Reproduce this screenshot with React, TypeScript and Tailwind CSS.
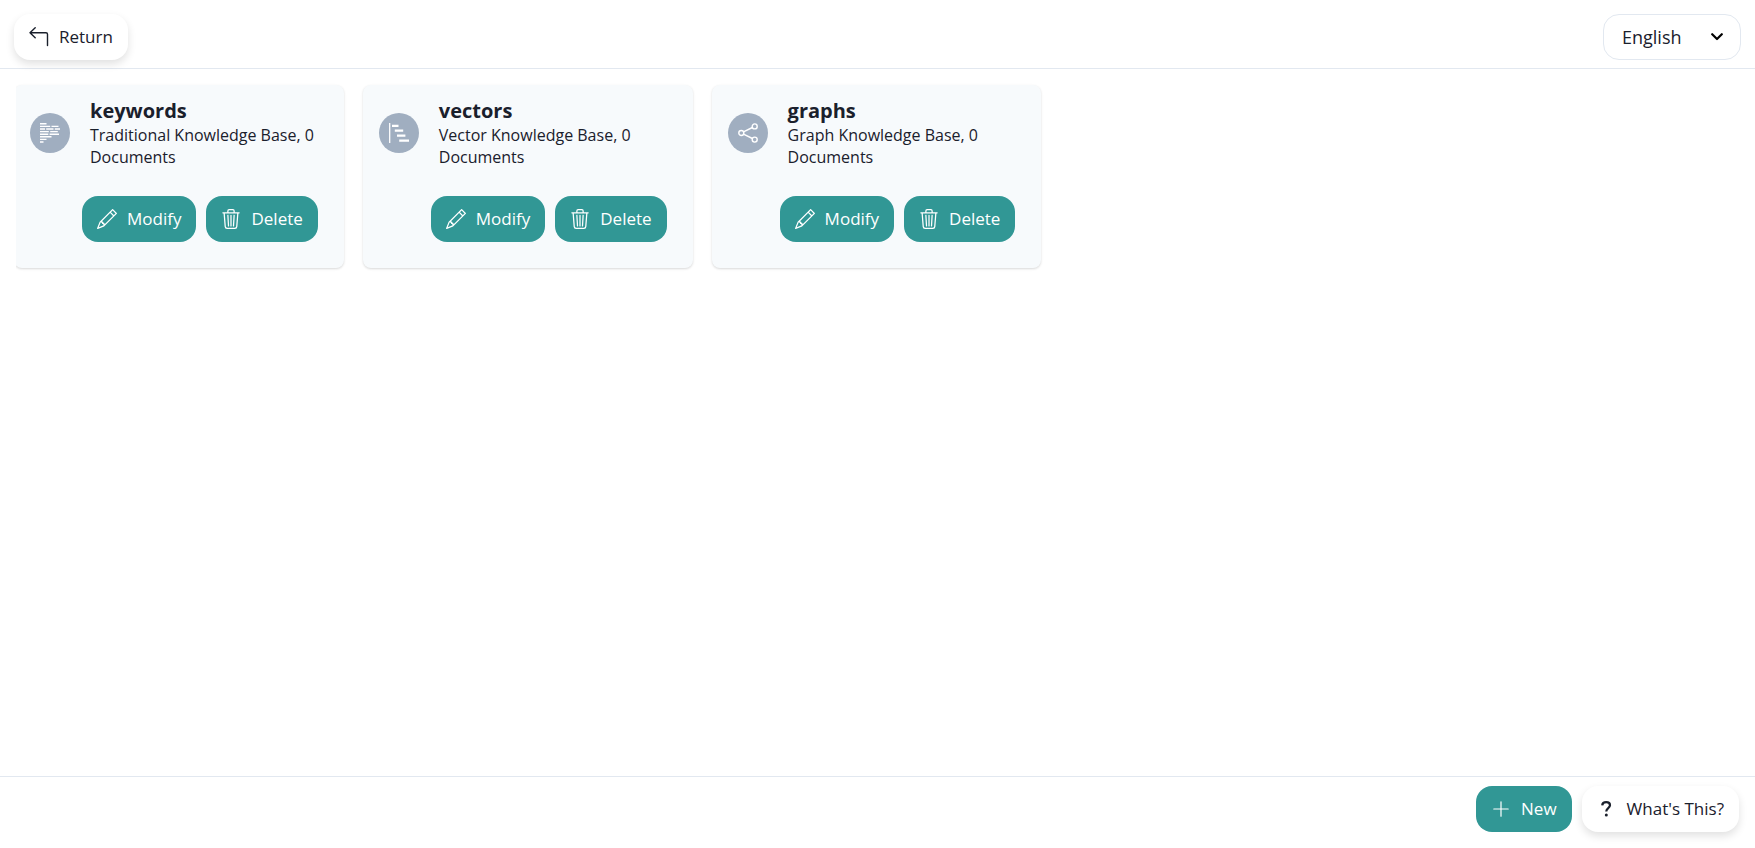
import type { ReactNode } from "react";
import { BsPencil, BsTrash3 } from "react-icons/bs";

const icon = "h-5 w-5 shrink-0";
const button = "flex h-[46px] items-center gap-2.5 rounded-2xl pl-[15px] pr-[15px] pb-px text-[17px] leading-6";
const solid = "bg-[#319795] text-white";
const raised = "bg-white text-[#1a202c] shadow-[0_4px_8px_rgba(0,0,0,0.12)]";

function ReturnIcon() {
  return (
    <svg className={icon} viewBox="0 0 20 20" fill="none" stroke="currentColor" strokeWidth="1.4" strokeLinecap="round" strokeLinejoin="round" aria-hidden="true">
      <path d="M6.2.8 1 5.8l5.2 5M1 5.8H17a1.5 1.5 0 0 1 1.5 1.5V18.5" />
    </svg>
  );
}

function PlusIcon() {
  return (
    <svg className={icon} viewBox="0 0 20 20" fill="none" stroke="currentColor" strokeWidth="1.2" strokeLinecap="round" aria-hidden="true">
      <path d="M10 2.8v14.4M2.8 10h14.4" />
    </svg>
  );
}

function QuestionIcon() {
  return (
    <svg className={icon} viewBox="0 0 20 20" fill="none" stroke="currentColor" strokeWidth="2.2" aria-hidden="true">
      <path d="M5.2 6.4C5.4 4.3 7 3.2 9.2 3.2c2.3 0 3.8 1.2 3.8 3.1 0 2.7-3.7 2.8-3.7 5.9v.4" />
      <circle cx="9.3" cy="16" r="1.5" fill="currentColor" stroke="none" />
    </svg>
  );
}

function KeywordsIcon() {
  return (
    <svg className={icon} viewBox="0 0 20 20" fill="none" stroke="currentColor" strokeWidth="1.4" aria-hidden="true">
      <path d="M0 .8h6.5M0 3.4h10.2M11.5 3.4h7M0 6h5M6.2 6h7.3M14.8 6H20M0 8.6h8.8M10.2 8.6h7.6M0 11.2h8.3M9.6 11.2h9.4M0 13.8h11.5M0 16.4h6.5M0 19h3.5" />
    </svg>
  );
}

function VectorsIcon() {
  return (
    <svg className={icon} viewBox="0 0 20 20" fill="none" stroke="currentColor" strokeWidth="1.3" aria-hidden="true">
      <path d="M.7 0v20" />
      <path d="M3 2.8h6.5M5.8 7.6h8.4M8 12.6h8.4M10.2 17.6h9.8" strokeWidth="2.3" />
    </svg>
  );
}

function GraphsIcon() {
  return (
    <svg className={icon} viewBox="0 0 20 20" fill="none" stroke="currentColor" strokeWidth="1.4" aria-hidden="true">
      <circle cx="3.3" cy="10" r="2.5" />
      <circle cx="16.7" cy="3.4" r="2.5" />
      <circle cx="16.7" cy="16.6" r="2.5" />
      <path d="m5.5 8.9 8.9-4.4M5.5 11.1l8.9 4.4" />
    </svg>
  );
}

const bases: { name: string; kind: string; icon: ReactNode }[] = [
  { name: "keywords", kind: "Traditional Knowledge Base", icon: <KeywordsIcon /> },
  { name: "vectors", kind: "Vector Knowledge Base", icon: <VectorsIcon /> },
  { name: "graphs", kind: "Graph Knowledge Base", icon: <GraphsIcon /> },
];

export default function App() {
  return (
    <div className="flex min-h-screen flex-col bg-white font-['Open_Sans','Noto_Sans',sans-serif] text-[#1a202c]">
      <header className="flex items-center justify-between border-b border-[#e2e8f0] pt-3.5 pr-3.5 pb-2 pl-3.5">
        <button type="button" className={`${button} ${raised}`}>
          <ReturnIcon />
          Return
        </button>
        <div className="grid items-center">
          <select
            aria-label="Language"
            className="col-start-1 row-start-1 h-[46px] w-[138px] appearance-none rounded-2xl border border-[#e2e8f0] bg-white pl-[18px] text-lg"
            defaultValue="en"
          >
            <option value="en">English</option>
          </select>
          <svg className="pointer-events-none col-start-1 row-start-1 mr-[18px] h-3 w-3 justify-self-end" viewBox="0 0 12 12" fill="none" stroke="#000" strokeWidth="2.2" strokeLinecap="round" strokeLinejoin="round" aria-hidden="true">
            <path d="m1.2 3.2 4.8 4.8 4.8-4.8" />
          </svg>
        </div>
      </header>

      <main className="ml-4 flex-1 overflow-hidden pt-4 pr-4">
        <div className="-ml-0.5 grid grid-cols-[repeat(auto-fill,minmax(300px,1fr))] gap-[19px]">
          {bases.map((base) => (
            <article key={base.name} className="rounded-lg bg-[#f7fafc] pt-[13px] pb-[26px] shadow-[0_1px_3px_rgba(0,0,0,0.1),0_1px_2px_rgba(0,0,0,0.06)]">
              <div className="flex items-center gap-5 pr-6 pl-4">
                <div className="flex h-10 w-10 shrink-0 items-center justify-center rounded-full bg-[#a0aec0] text-white">{base.icon}</div>
                <div>
                  <h2 className="text-xl leading-[26px] font-bold">{base.name}</h2>
                  <p className="text-base leading-[22px]">{base.kind}, 0 Documents</p>
                </div>
              </div>
              <div className="mt-7 flex justify-end gap-2.5 pr-[26px]">
                <button type="button" className={`${button} ${solid}`}>
                  <BsPencil className={icon} />
                  Modify
                </button>
                <button type="button" className={`${button} ${solid}`}>
                  <BsTrash3 className={icon} />
                  Delete
                </button>
              </div>
            </article>
          ))}
        </div>
      </main>

      <footer className="flex justify-end gap-2.5 border-t border-[#e2e8f0] pt-[9px] pr-4 pb-4">
        <button type="button" className={`${button} ${solid}`}>
          <PlusIcon />
          New
        </button>
        <button type="button" className={`${button} ${raised}`}>
          <QuestionIcon />
          What's This?
        </button>
      </footer>
    </div>
  );
}
